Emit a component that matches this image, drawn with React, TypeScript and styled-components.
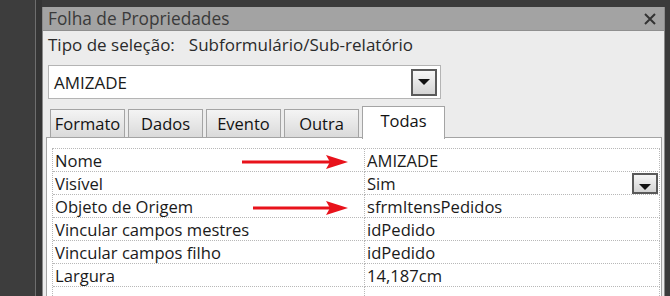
import React from "react";
import styled, { createGlobalStyle } from "styled-components";

const GlobalStyle = createGlobalStyle`
    html, body {
        margin: 0;
        padding: 0;
        background: #3b3b3b;
    }
    * {
        box-sizing: border-box;
    }
`;

const Screen = styled.div`
    width: 670px;
    height: 296px;
    display: flex;
    overflow: hidden;
    background: #3b3b3b;
    font-family: "Open Sans", "Noto Sans", sans-serif;
    color: #1a1a1a;
    position: relative;
`;

const DarkStrip = styled.div`
    width: 36px;
    background: #3d3d3d;
    border-right: 1px solid #6e6e6e;
`;

const Gutter = styled.div`
    width: 6px;
    background: #353535;
`;

const Panel = styled.div`
    flex: 1;
    margin-top: 7px;
    margin-right: 5px;
    display: flex;
    flex-direction: column;
    background: #ececec;
    border-left: 1px solid #8a8a8a;
    border-right: 1px solid #8a8a8a;
`;

const TitleBar = styled.div`
    height: 25px;
    background: #a3a3a3;
    display: flex;
    align-items: center;
    justify-content: space-between;
    padding: 0 8px 0 5px;
    font-size: 17.3px;
    color: #3a3a3a;
    border-bottom: 1px solid #8f8f8f;
`;

const CloseIcon = styled.svg`
    width: 12px;
    height: 12px;
`;

const Body = styled.div`
    flex: 1;
    display: flex;
    flex-direction: column;
    padding: 0 0 0 2px;
`;

const SelectionType = styled.div`
    height: 26px;
    display: flex;
    align-items: center;
    gap: 14px;
    padding-left: 3px;
    font-size: 17px;
    color: #2a2a2a;
`;

const Combo = styled.div`
    margin: 8px 0 0 3px;
    width: 393px;
    height: 34px;
    background: #fff;
    border: 1px solid #b4b4b4;
    display: flex;
    align-items: center;
    justify-content: space-between;
    padding: 0 3px 0 5px;
    font-size: 17px;
`;

const DropButton = styled.div<{ $small?: boolean }>`
    width: 26px;
    height: ${p => (p.$small ? 21 : 27)}px;
    border: 2px solid #5a5a5a;
    background: linear-gradient(#f6f6f6, #d4d4d4);
    display: flex;
    align-items: ${p => (p.$small ? "flex-end" : "center")};
    justify-content: center;
    padding-bottom: ${p => (p.$small ? 2 : 0)}px;

    &::after {
        content: "";
        border-left: 6px solid transparent;
        border-right: 6px solid transparent;
        border-top: 6px solid #111;
    }
`;

const TabStrip = styled.div`
    margin-top: 6px;
    display: flex;
    align-items: flex-end;
    gap: 3px;
    padding-left: 5px;
    height: 33px;
    position: relative;
    z-index: 1;
`;

const Tab = styled.div<{ $active?: boolean }>`
    height: ${p => (p.$active ? 33 : 29)}px;
    width: ${p => (p.$active ? 83 : 75)}px;
    display: flex;
    align-items: center;
    justify-content: center;
    font-size: 16.5px;
    font-weight: 500;
    color: #121212;
    border: 1px solid #a4a4a4;
    border-bottom: ${p => (p.$active ? "none" : "1px solid #a4a4a4")};
    background: ${p => (p.$active ? "#fff" : "linear-gradient(#f4f4f4, #dadada)")};
    padding-bottom: ${p => (p.$active ? 6 : 0)}px;
    margin-bottom: ${p => (p.$active ? -1 : 0)}px;
`;

const TabPage = styled.div`
    flex: 1;
    margin-top: -1px;
    margin-left: 1px;
    margin-right: 2px;
    background: #fff;
    border: 1px solid #a4a4a4;
    border-bottom: none;
    padding: 10px 1px 0 5px;
`;

const Grid = styled.div`
    display: grid;
    grid-template-columns: 312px 1fr;
    border-top: 1px dotted #b8b8b8;
    border-left: 1px dotted #b8b8b8;
`;

const Cell = styled.div`
    height: 23px;
    display: flex;
    align-items: center;
    justify-content: space-between;
    padding: 0 1px 0 2px;
    font-size: 16.6px;
    border-right: 1px dotted #b8b8b8;
    border-bottom: 1px dotted #b8b8b8;
    white-space: nowrap;
`;

const Arrows = styled.svg`
    position: absolute;
    left: 0;
    top: 0;
    pointer-events: none;
`;

const rows: [string, string][] = [
    ["Nome", "AMIZADE"],
    ["Visível", "Sim"],
    ["Objeto de Origem", "sfrmItensPedidos"],
    ["Vincular campos mestres", "idPedido"],
    ["Vincular campos filho", "idPedido"],
    ["Largura", "14,187cm"],
    ["", ""],
];

const tabs = ["Formato", "Dados", "Evento", "Outra", "Todas"];

const App: React.FC = () => {
    return (
        <Screen>
            <GlobalStyle/>
            <DarkStrip/>
            <Gutter/>
            <Panel>
                <TitleBar>
                    Folha de Propriedades
                    <CloseIcon viewBox="0 0 12 12">
                        <path d="M1 1 L11 11 M11 1 L1 11" stroke="#333" strokeWidth="2"/>
                    </CloseIcon>
                </TitleBar>
                <Body>
                    <SelectionType>
                        <span>Tipo de seleção:</span>
                        <span>Subformulário/Sub-relatório</span>
                    </SelectionType>
                    <Combo>
                        AMIZADE
                        <DropButton/>
                    </Combo>
                    <TabStrip>
                        {tabs.map(t => (
                            <Tab key={t} $active={t === "Todas"}>{t}</Tab>
                        ))}
                    </TabStrip>
                    <TabPage>
                        <Grid>
                            {rows.map(([label, value], i) => (
                                <React.Fragment key={i}>
                                    <Cell>{label}</Cell>
                                    <Cell>
                                        {value}
                                        {label === "Visível" && <DropButton $small/>}
                                    </Cell>
                                </React.Fragment>
                            ))}
                        </Grid>
                    </TabPage>
                </Body>
            </Panel>
            <Arrows width="670" height="296" viewBox="0 0 670 296">
                <path d="M242 162 H330" stroke="#e8121b" strokeWidth="3"/>
                <path d="M348 162 L326 155 L330 162 L326 169 Z" fill="#e8121b"/>
                <path d="M253 208 H330" stroke="#e8121b" strokeWidth="3"/>
                <path d="M348 208 L326 201 L330 208 L326 215 Z" fill="#e8121b"/>
            </Arrows>
        </Screen>
    );
};

export default App;
